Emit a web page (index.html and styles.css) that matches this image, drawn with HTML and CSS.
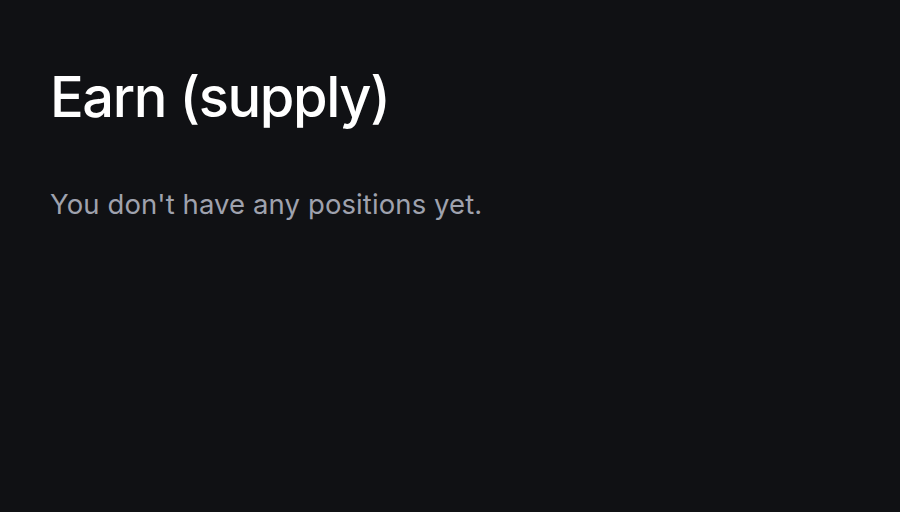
FILE: index.html
```html
<!DOCTYPE html>
<html>
<head>
  <meta charset="UTF-8" />
  <title>Earn (supply)</title>
  <link rel="stylesheet" href="styles.css">
</head>
<body>
  <div class="page">
    <h1 class="title">Earn (supply)</h1>
    <p class="empty">You don't have any positions yet.</p>
  </div>
</body>
</html>
```

FILE: styles.css
```css
html, body {
  margin: 0;
  height: 100%;
}

body {
  font-family: Inter, "Noto Sans", sans-serif;
  background: #101114;
  color: #ffffff;
}

.page {
  padding: 69px 50px;
}

.title {
  margin: 0;
  font-size: 56px;
  font-weight: 500;
  line-height: 1;
  letter-spacing: -1.4px;
}

.empty {
  margin: 66px 0 0;
  font-size: 27.5px;
  line-height: 1;
  letter-spacing: 0.1px;
  color: #9fa2ae;
}
```
